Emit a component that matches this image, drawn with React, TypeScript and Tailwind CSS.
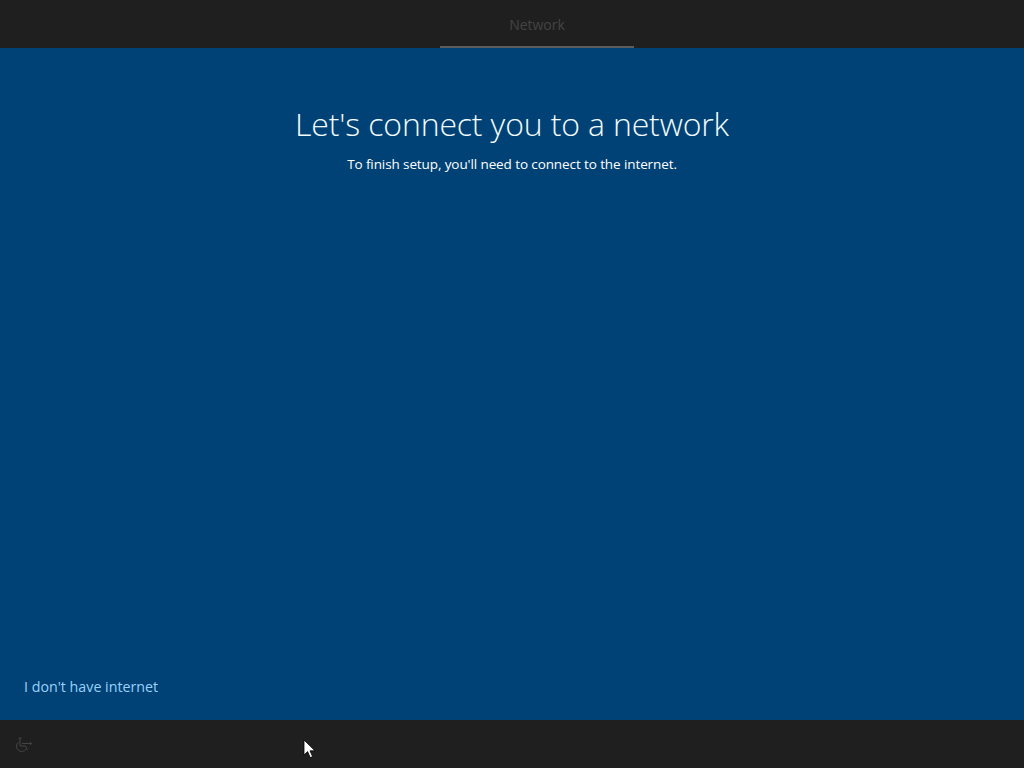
import React from 'react';

const AccessIcon: React.FC = () => (
    <svg width="18" height="16" viewBox="0 0 18 16" fill="none" stroke="#444444" strokeWidth="1" className="mt-[2px]">
        <circle cx="5" cy="1.5" r="1" />
        <path d="M5 3v6h5.5l2 4" />
        <path d="M3.5 5.2a5.2 5.2 0 1 0 7.5 7" />
        <path d="M7 6.5h9.5l-1.5-1.5M16.5 6.5 15 8" />
    </svg>
);

const Cursor: React.FC = () => (
    <svg width="13" height="20" viewBox="0 0 13 20" className="absolute left-[303px] top-[739px]">
        <path d="M1 1v15l3.6-3.4 2.6 6 2.4-1-2.6-5.8H12z" fill="#fff" stroke="#000" strokeWidth="0.8" />
    </svg>
);

export default function App() {
    return (
        <div className="relative flex h-[768px] w-[1024px] flex-col overflow-hidden bg-[#004275] font-['Open_Sans','Liberation_Sans',sans-serif]">
            <header className="h-[48px] shrink-0 bg-[#1f1f1f]">
                <div className="ml-[440px] flex h-[48px] w-[194px] items-center justify-center border-b-2 border-[#5c5c5c] pt-[2px]">
                    <span className="text-[14px] text-[#444444]">Network</span>
                </div>
            </header>
            <main className="flex flex-1 flex-col">
                <div className="flex flex-col items-center pt-[50px]">
                    <h1 className="text-[32px] leading-[52px] font-light tracking-[-0.15px] text-[#f2fbff]">Let's connect you to a network</h1>
                    <p className="mt-[4px] text-[13.5px] leading-[20px] tracking-[-0.1px] text-white">To finish setup, you'll need to connect to the internet.</p>
                </div>
                <div className="mt-auto pb-[22px] pl-[24px]">
                    <span className="text-[14.25px] leading-[20px] text-[#99d1fb]">I don't have internet</span>
                </div>
            </main>
            <footer className="flex h-[48px] shrink-0 items-center bg-[#1f1f1f] pl-[15px]">
                <AccessIcon />
            </footer>
            <Cursor />
        </div>
    );
}
